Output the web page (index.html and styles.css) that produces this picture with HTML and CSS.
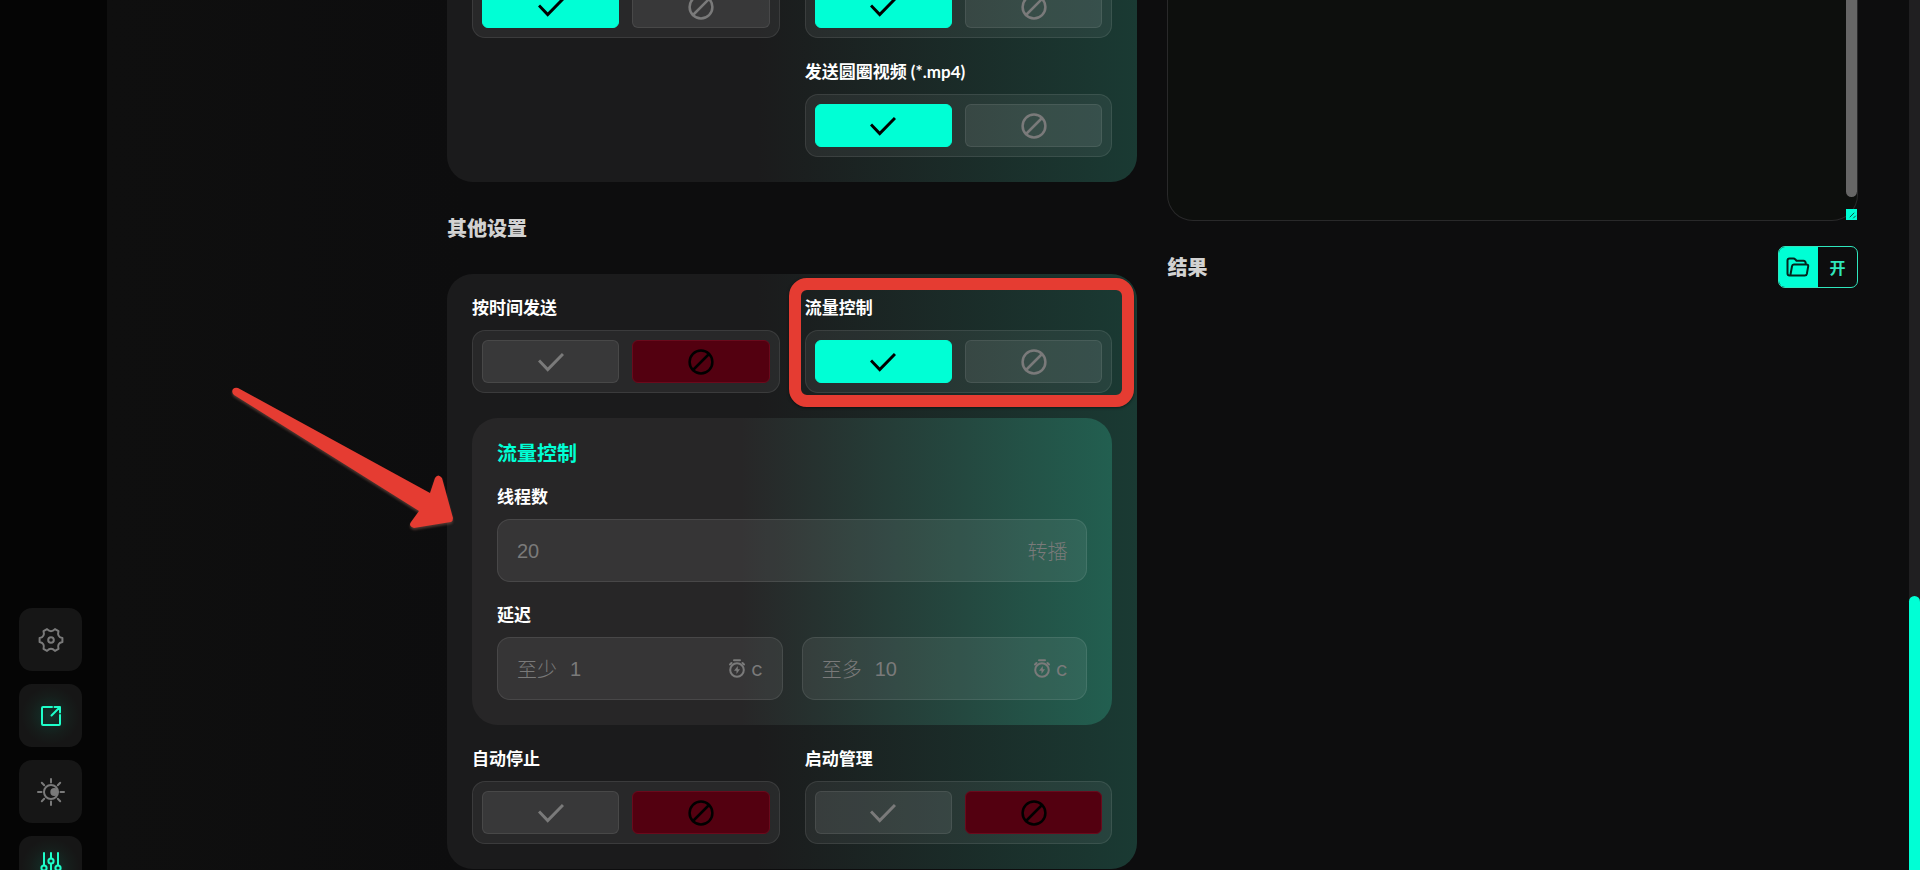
FILE: index.html
```html
<!DOCTYPE html>
<html lang="zh-CN">
<head>
<meta charset="utf-8">
<meta name="viewport" content="width=device-width, initial-scale=1">
<title>其他设置</title>
<link rel="stylesheet" href="styles.css">
</head>
<body>
<svg class="sprite" aria-hidden="true">
  <symbol id="check" viewBox="0 0 26 20"><path d="M1 8.500 9.700 17.500 25 2"/></symbol>
  <symbol id="ban" viewBox="0 0 26 26"><circle cx="13" cy="13" r="11.400"/><path d="M5 21 21 5"/></symbol>
  <symbol id="timer" viewBox="0 0 16 19"><circle cx="8" cy="11" r="6.800"/><path d="M5 1.200h6M1 5.500l1.500-1.500M15 5.500 13.500 4"/><path class="solid" d="M8.800 7 5 11.700h2.500v3.300l3.500-4.700H8.800z"/></symbol>
</svg>
<div class="app">
  <nav class="rail">
    <button class="rail-btn" type="button" aria-label="设置">
      <svg width="26" height="26" viewBox="0 0 26 26"><path d="M24.400 11V15Q21.500 15.500 20.600 17.400 19.700 19.300 20.500 21.900L17 23.900Q15 21.800 13 21.800 11 21.800 9 23.900L5.500 21.900Q6.300 19.300 5.400 17.400 4.500 15.500 1.600 15V11Q4.500 10.500 5.400 8.600 6.300 6.700 5.500 4.100L9 2.100Q11 4.200 13 4.200 15 4.200 17 2.100L20.500 4.100Q19.700 6.700 20.600 8.600 21.500 10.500 24.400 11Z"/><circle cx="13" cy="13" r="2.800"/></svg>
    </button>
    <button class="rail-btn rail-btn--on" type="button" aria-label="打开">
      <svg width="22" height="22" viewBox="0 0 22 22"><path d="M12 2H3Q2 2 2 3V19Q2 20 3 20H19Q20 20 20 19V10M11.500 10.500 19.500 2.500M14.500 2H20V7.500"/></svg>
    </button>
    <button class="rail-btn" type="button" aria-label="主题">
      <svg width="28" height="28" viewBox="0 0 28 28"><circle cx="14" cy="14" r="7"/><path d="M14 1v3.500M14 23.500V27M1 14h3.500M23.500 14H27M4.800 4.800l2.400 2.400M20.800 20.800l2.400 2.400M4.800 23.200l2.400-2.400M20.800 7.200l2.400-2.400"/><circle class="solid" cx="17.300" cy="14" r="4"/></svg>
    </button>
    <button class="rail-btn rail-btn--on" type="button" aria-label="参数">
      <svg width="22" height="32" viewBox="0 0 22 32"><path d="M4 1V13M4 19V31M11 1V6M11 12V31M18 1V13M18 19V31"/><circle cx="4" cy="16" r="2.600"/><circle cx="11" cy="9" r="2.600"/><circle cx="18" cy="16" r="2.600"/></svg>
    </button>
  </nav>

  <main class="content">
    <div class="settings">
      <section class="card">
        <div class="pair">
          <div class="field">
            <div class="switch">
              <button class="opt opt--yes" type="button" aria-label="是"><svg class="check"><use href="#check"/></svg></button>
              <button class="opt" type="button" aria-label="否"><svg class="ban"><use href="#ban"/></svg></button>
            </div>
          </div>
          <div class="field">
            <div class="switch">
              <button class="opt opt--yes" type="button" aria-label="是"><svg class="check"><use href="#check"/></svg></button>
              <button class="opt" type="button" aria-label="否"><svg class="ban"><use href="#ban"/></svg></button>
            </div>
          </div>
          <div class="field field--second" role="group" aria-labelledby="l-circle">
            <span class="label" id="l-circle">发送圆圈视频 (*.mp4)</span>
            <div class="switch">
              <button class="opt opt--yes" type="button" aria-label="是"><svg class="check"><use href="#check"/></svg></button>
              <button class="opt" type="button" aria-label="否"><svg class="ban"><use href="#ban"/></svg></button>
            </div>
          </div>
        </div>
      </section>

      <h2 class="heading">其他设置</h2>

      <section class="card">
        <div class="pair">
          <div class="field" role="group" aria-labelledby="l-time">
            <span class="label" id="l-time">按时间发送</span>
            <div class="switch">
              <button class="opt" type="button" aria-label="是"><svg class="check"><use href="#check"/></svg></button>
              <button class="opt opt--no" type="button" aria-label="否"><svg class="ban"><use href="#ban"/></svg></button>
            </div>
          </div>
          <div class="field" role="group" aria-labelledby="l-flow">
            <span class="label" id="l-flow">流量控制</span>
            <div class="switch">
              <button class="opt opt--yes" type="button" aria-label="是"><svg class="check"><use href="#check"/></svg></button>
              <button class="opt" type="button" aria-label="否"><svg class="ban"><use href="#ban"/></svg></button>
            </div>
            <span class="marker"></span>
          </div>
        </div>

        <div class="panel">
          <h3 class="panel-title">流量控制</h3>
          <div class="field">
            <label class="label" for="threads">线程数</label>
            <div class="box">
              <input id="threads" type="text" placeholder="20">
              <span>转播</span>
            </div>
          </div>
          <div class="field" role="group" aria-labelledby="l-delay">
            <span class="label" id="l-delay">延迟</span>
            <div class="delay">
              <div class="box">
                <label for="min">至少</label>
                <input id="min" type="text" placeholder="1">
                <span class="unit"><svg class="timer"><use href="#timer"/></svg>с</span>
              </div>
              <div class="box">
                <label for="max">至多</label>
                <input id="max" type="text" placeholder="10">
                <span class="unit"><svg class="timer"><use href="#timer"/></svg>с</span>
              </div>
            </div>
          </div>
        </div>

        <div class="pair">
          <div class="field" role="group" aria-labelledby="l-stop">
            <span class="label" id="l-stop">自动停止</span>
            <div class="switch">
              <button class="opt" type="button" aria-label="是"><svg class="check"><use href="#check"/></svg></button>
              <button class="opt opt--no" type="button" aria-label="否"><svg class="ban"><use href="#ban"/></svg></button>
            </div>
          </div>
          <div class="field" role="group" aria-labelledby="l-launch">
            <span class="label" id="l-launch">启动管理</span>
            <div class="switch">
              <button class="opt" type="button" aria-label="是"><svg class="check"><use href="#check"/></svg></button>
              <button class="opt opt--no" type="button" aria-label="否"><svg class="ban"><use href="#ban"/></svg></button>
            </div>
          </div>
        </div>

        <svg class="arrow" width="226" height="146" viewBox="0 0 226 146" aria-hidden="true"><path d="M7 4 199 109 204 94Q207 89 211 94L222 134Q222 137 220 138L183 144Q177 142 180 138L188 127 3 11Q0 8 2 5 4 3 7 4Z"/></svg>
      </section>
    </div>

    <div class="output">
      <div class="log">
        <textarea readonly aria-label="日志"></textarea>
        <span class="log-thumb"></span>
        <svg class="log-grip" width="11" height="11" viewBox="0 0 11 11"><path d="M4 8 8 4M7.500 9l2-2"/></svg>
      </div>
      <div class="result">
        <h2 class="heading heading--flush">结果</h2>
        <button class="open" type="button">
          <span class="open-icon"><svg width="24" height="20" viewBox="0 0 24 20"><path d="M4.500 18.500H3.500Q1.500 18.500 1.500 16.500V3.500Q1.500 1.500 3.500 1.500H7.500Q8.500 1.500 9.200 2.300L10.500 3.700H17.500Q19.500 3.700 19.800 6.500M7.800 7.500H20.500Q22.500 7.500 22.200 9.300L20.900 16.700Q20.500 18.500 18.800 18.500H5.500Q4.300 18.500 4.600 17L6 9.200Q6.300 7.500 7.800 7.500Z"/></svg></span>
          <span class="open-text">开</span>
        </button>
      </div>
    </div>
  </main>

  <div class="track"><div class="thumb"></div></div>
</div>
</body>
</html>
```
FILE: styles.css
```css
:root {
  --accent: #00ffd5;
  --mute: #7a7a7a;
  --line: rgba(255, 255, 255, .09);
}

* { box-sizing: border-box; }

body {
  margin: 0;
  background: #0d0d0e;
  color: #fff;
  font-family: "Lato", "Noto Sans CJK SC", sans-serif;
  overflow: hidden;
}

button { font: inherit; color: inherit; padding: 0; cursor: pointer; }
h2, h3 { margin: 0; }

svg { fill: none; stroke: currentColor; stroke-width: 2; stroke-linejoin: round; stroke-linecap: round; }
.solid { fill: currentColor; stroke: none; }
.sprite { position: absolute; width: 0; height: 0; }

.app {
  display: flex;
  height: 100vh;
  overflow: hidden;
}

/* icon rail */
.rail {
  flex: none;
  width: 107px;
  height: calc(100% + 29px);
  padding-left: 19px;
  background: #050505;
  display: flex;
  flex-direction: column;
  justify-content: flex-end;
  gap: 13px;
}

.rail-btn {
  width: 63px;
  height: 63px;
  border: 0;
  border-radius: 13px;
  background: #161616;
  color: var(--mute);
  display: grid;
  place-items: center;
}

.rail-btn--on {
  color: #1effca;
  background: radial-gradient(circle, #12332b 0, #161c1a 45%, #161616 65%);
}

/* columns */
.content {
  flex: 1;
  min-width: 0;
  padding: 0 51px;
  display: grid;
  grid-template-columns: minmax(0, 3fr) minmax(0, 8fr) minmax(0, 8fr);
  gap: 30px;
  background: linear-gradient(90deg, #0f0f0f, #0d0d0e 20%);
}

.settings {
  grid-column: 2;
  height: 100vh;
  padding-bottom: 1px;
  display: flex;
  flex-direction: column;
  justify-content: flex-end;
}

.heading {
  padding: 36px 0;
  color: #d2d2d2;
  font-size: 20px;
  line-height: 20px;
  font-weight: 900;
}

.heading--flush { padding: 0; }

.card {
  position: relative;
  flex: none;
  padding: 25px;
  border-radius: 26px;
  background: linear-gradient(90deg, #1b1b1c 45%, #1a3a33);
  display: flex;
  flex-direction: column;
  gap: 25px;
}

.pair {
  display: grid;
  grid-template-columns: 1fr 1fr;
  gap: 25px;
}

.field {
  position: relative;
  display: flex;
  flex-direction: column;
  gap: 13px;
}

.field--second { grid-column: 2; }

.label {
  font-size: 17px;
  line-height: 18px;
  font-weight: 700;
}

.switch {
  height: 63px;
  padding: 9px;
  border: 1px solid var(--line);
  border-radius: 13px;
  background: rgba(255, 255, 255, .06);
  display: grid;
  grid-template-columns: 1fr 1fr;
  gap: 13px;
}

.opt {
  border: 1px solid rgba(255, 255, 255, .08);
  border-radius: 6px;
  background: rgba(255, 255, 255, .08);
  color: var(--mute);
  display: grid;
  place-items: center;
}

.opt--yes { background: var(--accent); border-color: var(--accent); color: #000; }
.opt--no { background: #530010; border-color: #6a0a1c; color: #000; }

.check { width: 26px; height: 20px; stroke-width: 3; stroke-linejoin: miter; stroke-linecap: butt; }
.ban { width: 26px; height: 26px; stroke-width: 2.5; }

/* nested panel */
.panel {
  padding: 25px;
  border-radius: 26px;
  background: linear-gradient(90deg, #272627 42%, #225f50);
  display: flex;
  flex-direction: column;
  gap: 24px;
}

.panel-title {
  color: var(--accent);
  font-size: 20px;
  line-height: 21px;
  font-weight: 700;
}

.delay {
  display: grid;
  grid-template-columns: repeat(2, minmax(0, 1fr));
  gap: 19px;
}

.box {
  height: 63px;
  padding: 0 19px;
  border: 1px solid var(--line);
  border-radius: 13px;
  background: rgba(255, 255, 255, .07);
  color: var(--mute);
  font-size: 20px;
  line-height: 24px;
  font-weight: 300;
  display: flex;
  align-items: center;
  gap: 13px;
}

.box input {
  flex: 1;
  min-width: 0;
  padding: 0;
  border: 0;
  outline: 0;
  background: none;
  color: #fff;
  font: 20px/24px "Liberation Sans", sans-serif;
}

.box input::placeholder { color: var(--mute); opacity: 1; }

.unit {
  display: flex;
  align-items: center;
  gap: 6px;
  font-family: "Inter", sans-serif;
  font-weight: 400;
}
.timer { width: 16px; height: 19px; }

/* annotations */
.marker {
  position: absolute;
  z-index: 1;
  inset: -21px -22px -14px -16px;
  border: 12px solid #e53c32;
  border-radius: 18px;
  box-shadow: 0 1px 3px rgba(0, 0, 0, .5);
}

.arrow {
  position: absolute;
  top: 110px;
  left: -216px;
  fill: #e53c32;
  stroke: none;
  filter: drop-shadow(0 2px 1px rgba(120, 80, 70, .6));
}

/* right column */
.output { display: flex; flex-direction: column; gap: 25px; }

.log { position: relative; height: 221px; }

.log textarea {
  display: block;
  width: 100%;
  height: 100%;
  border: 1px solid #29292a;
  border-top: 0;
  border-radius: 0 0 26px 26px;
  background: #0d0f0d;
  color: #fff;
  resize: none;
  outline: 0;
}

.log-thumb {
  position: absolute;
  top: 0;
  right: 1px;
  width: 11px;
  height: 197px;
  border-radius: 0 0 6px 6px;
  background: #666;
}

.log-grip {
  position: absolute;
  right: 1px;
  bottom: 1px;
  background: var(--accent);
  color: #0b5547;
  stroke-width: 1;
}

.result { display: flex; align-items: center; justify-content: space-between; }

.open {
  width: 80px;
  height: 42px;
  border: 1px solid #2fe6bd;
  border-radius: 7px;
  background: none;
  overflow: hidden;
  display: grid;
  grid-template-columns: 1fr 1fr;
}

.open-icon { background: var(--accent); color: #04241d; display: grid; place-items: center; }
.open-text { color: #2fe6bd; font-size: 16px; font-weight: 700; align-self: center; }

/* page scrollbar */
.track {
  flex: none;
  width: 11px;
  background: #201f21;
  display: flex;
  flex-direction: column;
  justify-content: flex-end;
}

.thumb { height: 31.5%; border-radius: 6px 6px 0 0; background: var(--accent); }
```
